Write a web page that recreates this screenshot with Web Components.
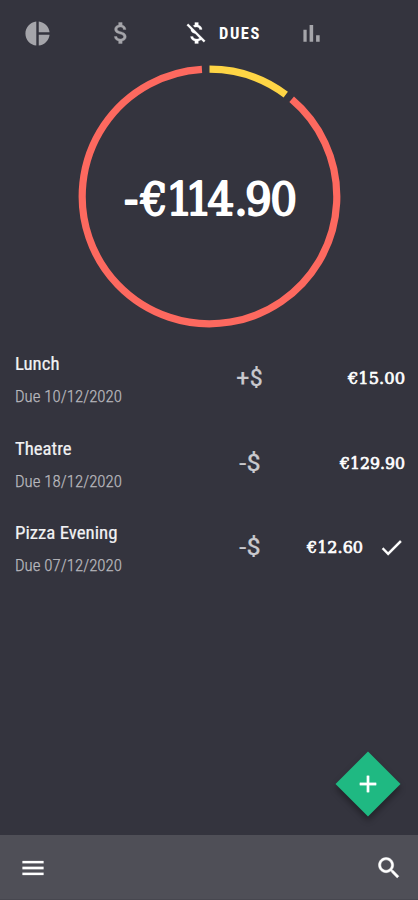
<!DOCTYPE html>
<html lang="en">
<head>
<meta charset="utf-8">
<title>Dues</title>
<style>
html, body { margin: 0; height: 100%; background: #34343e; overflow: hidden; }
</style>
</head>
<body>
<dues-app></dues-app>
<script>
function define(name, render) {
  customElements.define(name, class extends HTMLElement {
    connectedCallback() {
      if (this.shadowRoot) return;
      const t = document.createElement('template');
      t.innerHTML = render(this);
      this.attachShadow({ mode: 'open' }).appendChild(t.content.cloneNode(true));
    }
  });
}

/* Text condensed to a given width: attributes text, w, h, base (baseline), size, kind */
define('fit-text', el => {
  const a = n => el.getAttribute(n);
  return `<style>
    :host { display: block; width: ${a('w')}px; height: ${a('h')}px; }
    svg { display: block; overflow: visible; }
    text { font-family: "Roboto Condensed", Roboto, sans-serif; fill: currentColor; stroke: currentColor; stroke-width: 0; }
    .title { font-weight: 400; stroke-width: .2px; }
    .date { font-weight: 300; stroke-width: .25px; }
    .tab { font-weight: 700; letter-spacing: 1.6px; }
    .price { font-family: "DejaVu Serif", serif; stroke-width: .7px; stroke-linejoin: round; }
    .sign { font-weight: 400; stroke-width: .2px; }
  </style>
  <svg width="${a('w')}" height="${a('h')}"><text class="${a('kind')}" x="0" y="${a('base')}" font-size="${a('size')}" textLength="${a('w')}" lengthAdjust="spacingAndGlyphs">${a('text')}</text></svg>`;
});

/* Large total with tightly set slab digits */
define('total-sum', el => `<style>
    :host { display: block; width: 174px; height: 50px; }
    svg { display: block; overflow: visible; }
    text { font: 44px "DejaVu Serif", serif; fill: currentColor; stroke: currentColor; stroke-width: 2px; stroke-linejoin: round; }
  </style>
  <svg width="174" height="50"><text transform="scale(.96 1)" x="1 18.500 45 65 88 116 127 153.500" y="38.500 40 40 40 40 40 40 40">${el.getAttribute('text')}</text></svg>`);

const icons = {
  pie: 'M11 2v20c-5.07-.5-9-4.79-9-10s3.930-9.500 9-10zm2.030 0v8.990H22c-.470-4.740-4.240-8.520-8.970-8.990zm0 11.010V22c4.740-.470 8.500-4.250 8.970-8.990h-8.970z',
  dollar: 'M11.800 10.900c-2.270-.590-3-1.200-3-2.150 0-1.090 1.010-1.850 2.700-1.850 1.780 0 2.440.850 2.500 2.100h2.210c-.070-1.720-1.120-3.300-3.210-3.810V3h-3v2.160c-1.940.420-3.500 1.680-3.500 3.610 0 2.310 1.910 3.460 4.700 4.130 2.500.600 3 1.480 3 2.410 0 .690-.490 1.790-2.700 1.790-2.060 0-2.870-.920-2.980-2.100h-2.200c.120 2.190 1.760 3.420 3.680 3.830V21h3v-2.150c1.950-.370 3.500-1.500 3.500-3.550 0-2.840-2.430-3.810-4.700-4.400z',
  off: 'M12.500 6.900c1.780 0 2.440.850 2.500 2.100h2.210c-.070-1.720-1.120-3.300-3.210-3.810V3h-3v2.160c-.530.120-1.030.300-1.480.540l1.470 1.470c.410-.170.910-.270 1.510-.270zM5.330 4.060L4.060 5.330 7.500 8.770c0 2.080 1.560 3.210 3.910 3.910l3.510 3.510c-.340.480-1.050.910-2.420.910-2.060 0-2.870-.920-2.980-2.100h-2.200c.120 2.190 1.760 3.420 3.680 3.830V21h3v-2.150c.960-.180 1.820-.550 2.450-1.120l2.220 2.220 1.270-1.270L5.330 4.060z',
  bars: 'M5 9h3v11H5zM16.700 14h3.300v6h-3.300zM10.700 4.500h3.300V20h-3.300z',
  check: 'M9 16.170L4.830 12l-1.420 1.410L9 19 21 7l-1.410-1.410z',
  search: 'M15.500 14h-.790l-.280-.270C15.410 12.590 16 11.110 16 9.500 16 5.910 13.090 3 9.500 3S3 5.910 3 9.500 5.910 16 9.500 16c1.610 0 3.090-.590 4.230-1.570l.270.280v.790l5 4.990L20.490 19l-4.990-5zm-6 0C7.010 14 5 11.990 5 9.500S7.010 5 9.500 5 14 7.010 14 9.500 11.990 14 9.500 14z',
  menu: 'M3 18h18v-2H3v2zm0-5h18v-2H3v2zm0-7v2h18V6H3z',
  plus: 'M19 13h-6v6h-2v-6H5v-2h6V5h2v6h6v2z'
};
define('app-icon', el => {
  const s = el.getAttribute('size');
  return `<style>:host { display: block; flex: none; width: ${s}px; height: ${s}px; } svg { display: block; overflow: visible; }</style>
  <svg width="${s}" height="${s}" viewBox="0 0 24 24" fill="currentColor" stroke="currentColor" stroke-width="${el.getAttribute('bold') || 0}"><path d="${icons[el.getAttribute('name')]}"/></svg>`;
});

define('tab-bar', () => `<style>
  :host { display: grid; grid-template-columns: 84px 75px auto 1fr; height: 65px; box-sizing: border-box; padding: 19px 0 0 23px; color: #a5a5aa; align-items: start; }
  .on { display: flex; color: #fff; gap: 9px; width: 115.500px; }
  fit-text { margin-top: 2px; }
  app-icon[name=bars] { margin-top: 1px; }
</style>
<app-icon name="pie" size="29"></app-icon>
<app-icon name="dollar" size="28" bold=".3"></app-icon>
<div class="on"><app-icon name="off" size="28" bold=".2"></app-icon><fit-text kind="tab" text="DUES" w="42" h="24" base="18" size="17"></fit-text></div>
<app-icon name="bars" size="26"></app-icon>`);

define('dues-ring', () => {
  const p = d => { const r = d * Math.PI / 180; return (131.5 + 127.3 * Math.sin(r)).toFixed(2) + ' ' + (131.5 - 127.3 * Math.cos(r)).toFixed(2); };
  return `<style>
    :host { display: grid; width: 263px; height: 263px; margin-left: 78px; color: #fff; }
    svg, total-sum { grid-area: 1 / 1; }
    total-sum { margin: 110px 0 0 45px; }
  </style>
  <svg width="263" height="263" fill="none" stroke-width="7.200">
    <path stroke="#fed545" d="M${p(0)} A127.3 127.3 0 0 1 ${p(36.8)}"/>
    <path stroke="#fd695f" d="M${p(40.2)} A127.3 127.3 0 1 1 ${p(-3.4)}"/>
  </svg>
  <total-sum text="-€114.90"></total-sum>`;
});

define('due-row', el => {
  const a = n => el.getAttribute(n);
  return `<style>
    :host { display: grid; grid-template-columns: 220px 1fr; height: 84.300px; padding: 0 13px 0 15px; }
    .title { color: #f2f2f4; }
    .date { color: #b9b9be; margin-top: 8px; }
    .sign { color: #c9c9ce; display: grid; width: 29px; justify-content: center; flex: none; }
    .right { display: flex; align-items: flex-start; padding-top: 14px; }
    .price { color: #fff; margin-left: auto; }
    app-icon { color: #fff; margin-left: 15px; }
  </style>
  <div><fit-text class="title" kind="title" text="${a('name')}" w="${a('nw')}" h="25" base="19" size="18"></fit-text>
  <fit-text class="date" kind="date" text="Due ${a('date')}" w="107" h="24" base="18" size="17"></fit-text></div>
  <div class="right"><div class="sign"><fit-text kind="sign" text="${a('sign')}" w="${a('sw')}" h="28" base="21" size="24"></fit-text></div>
  <fit-text class="price" kind="price" text="${a('price')}" w="${a('pw')}" h="28" base="18.500" size="16.500"></fit-text>
  ${el.hasAttribute('paid') ? '<app-icon name="check" size="27" bold=".2"></app-icon>' : ''}</div>`;
});

define('add-button', () => `<style>
  :host { position: absolute; right: 18px; bottom: 83px; width: 65px; height: 66px; color: #fff; display: grid; place-items: center; }
  .d { grid-area: 1 / 1; width: 46px; height: 46px; background: #1fb982; transform: rotate(45deg); box-shadow: 3px 3px 6px rgba(0,0,0,.35); }
  app-icon { grid-area: 1 / 1; position: relative; }
</style><div class="d"></div><app-icon name="plus" size="28" bold=".3"></app-icon>`);

define('bottom-bar', () => `<style>
  :host { display: flex; justify-content: space-between; box-sizing: border-box; height: 65px; padding: 18.500px 15px 0 19px; background: #4f4f57; color: #fff; border-bottom: 1px solid #47474f; }
</style><app-icon name="menu" size="28" bold=".2"></app-icon><app-icon name="search" size="28" bold=".4"></app-icon>`);

define('dues-app', () => `<style>
  :host { display: flex; flex-direction: column; width: 418px; height: 900px; background: #34343e; position: relative; font-family: Roboto, sans-serif; }
  .list { flex: 1; padding-top: 23.400px; }
</style>
<tab-bar></tab-bar>
<dues-ring></dues-ring>
<div class="list">
  <due-row name="Lunch" nw="44.500" date="10/12/2020" sign="+$" sw="27" price="€15.00" pw="57"></due-row>
  <due-row name="Theatre" nw="56.500" date="18/12/2020" sign="-$" sw="22" price="€129.90" pw="65"></due-row>
  <due-row name="Pizza Evening" nw="102.500" date="07/12/2020" sign="-$" sw="22" price="€12.60" pw="56" paid></due-row>
</div>
<bottom-bar></bottom-bar>
<add-button></add-button>`);
</script>
</body>
</html>
